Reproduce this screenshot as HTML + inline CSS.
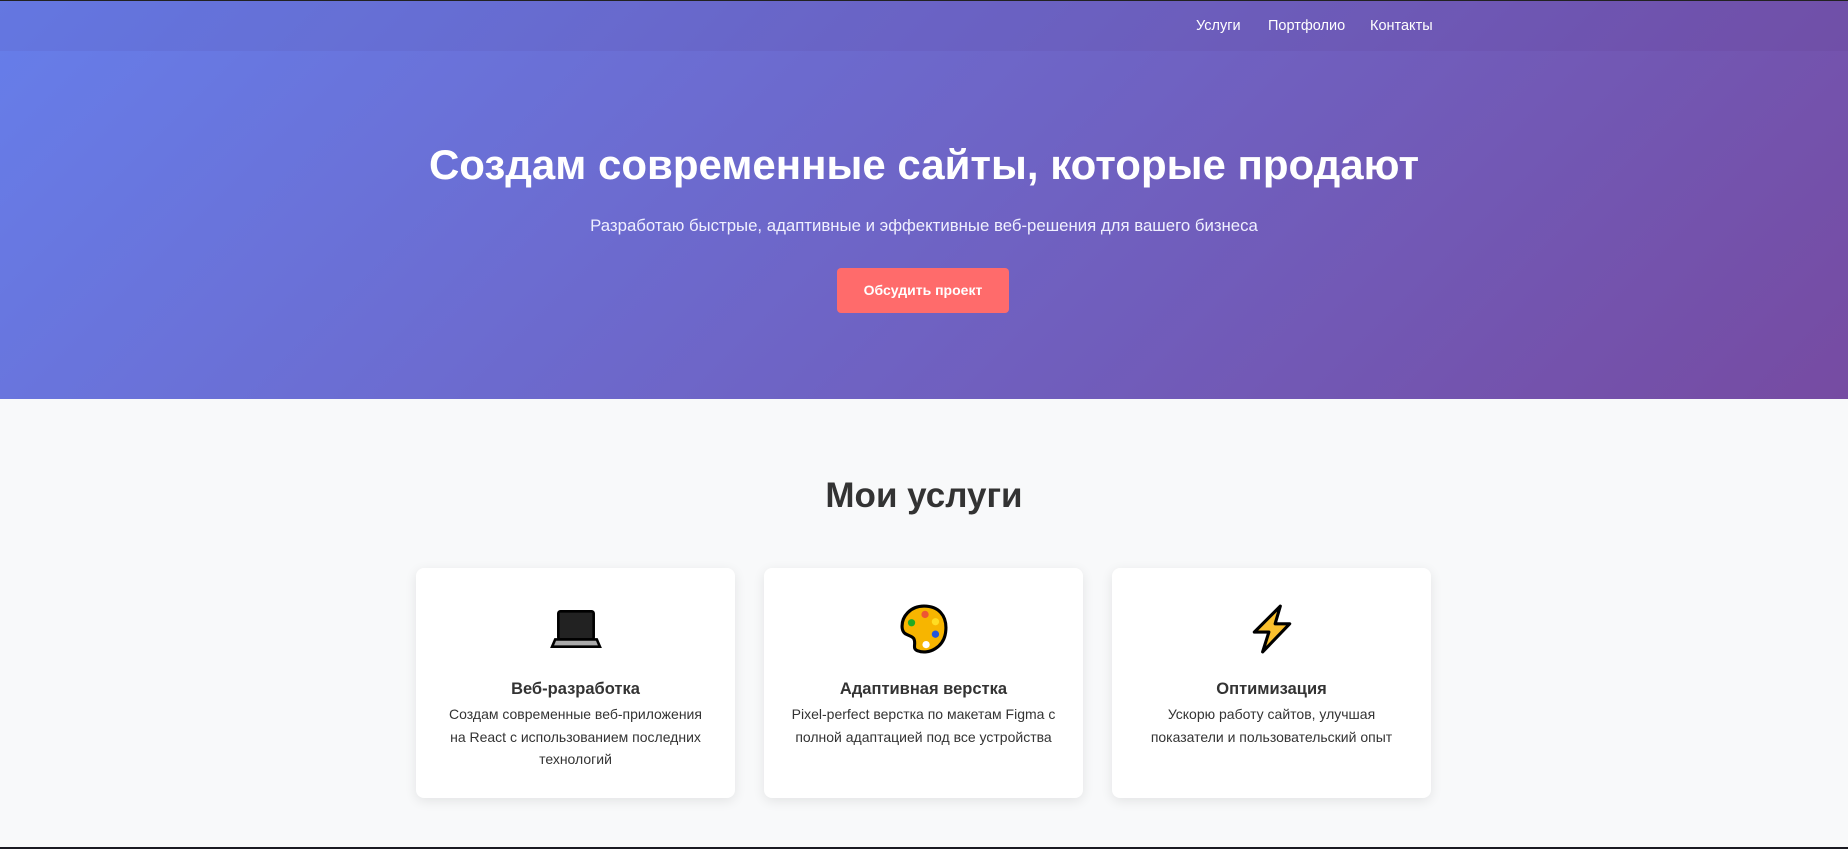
<!DOCTYPE html>
<html><head><meta charset="utf-8"><style>
*{margin:0;padding:0;box-sizing:border-box}
html,body{width:1848px;height:849px;overflow:hidden;background:#f8f9fa;font-family:"Liberation Sans",Arial,sans-serif}
.frame{position:relative;width:1848px;height:849px;border-top:1px solid #222;border-bottom:2px solid #1a1a22;overflow:hidden}
.hero{position:absolute;left:0;top:0;width:1848px;height:398px;background:linear-gradient(135deg,#667eea 0%,#764ba2 100%);color:#fff;text-align:center}
nav{position:absolute;left:0;top:0;width:100%;height:50px;background:rgba(60,20,90,0.06)}
nav a{position:absolute;top:17px;color:#fff;text-decoration:none;font-size:14.5px}
h1{position:absolute;left:0;width:100%;top:140px;font-size:42px;font-weight:bold}
.sub{position:absolute;left:0;width:100%;top:215px;font-size:16.8px;color:#f0f0ff}
.btn{position:absolute;left:837px;top:267px;width:172px;height:45px;background:#ff6b6b;border-radius:4px;color:#fff;font-weight:bold;font-size:14px;line-height:45px}
h2{position:absolute;left:0;width:100%;top:475px;text-align:center;font-size:35px;color:#333;font-weight:bold}
.card{position:absolute;top:567px;width:319px;height:230px;background:#fff;border-radius:8px;box-shadow:0 3px 12px rgba(0,0,0,0.09);text-align:center;color:#333}
.card svg{position:absolute;left:134px;top:35px}
.card h3{position:absolute;top:112px;left:0;width:100%;font-size:16.5px}
.card p{position:absolute;top:135px;left:5px;right:5px;font-size:14px;line-height:22.5px;white-space:nowrap}
</style></head><body><div class="frame">
<div class="hero">
<nav><a style="left:1196px">Услуги</a><a style="left:1268px">Портфолио</a><a style="left:1370px">Контакты</a></nav>
<h1>Создам современные сайты, которые продают</h1>
<div class="sub">Разработаю быстрые, адаптивные и эффективные веб-решения для вашего бизнеса</div>
<div class="btn">Обсудить проект</div>
</div>
<h2>Мои услуги</h2>
<div class="card" style="left:416px">
<svg width="52" height="52" viewBox="0 0 50 50"><rect x="8" y="8" width="34" height="27" rx="2" fill="#222" stroke="#000" stroke-width="2.5"/><path d="M5 35h40l3 7H2z" fill="#aaa" stroke="#000" stroke-width="2.5"/></svg>
<h3>Веб-разработка</h3>
<p>Создам современные веб-приложения<br>на React с использованием последних<br>технологий</p></div>
<div class="card" style="left:764px">
<svg width="52" height="52" viewBox="0 0 50 50"><path d="M25 3C12 3 3 13 4 24c1 8 8 6 11 10 3 5-2 10 4 12 10 4 26-3 27-20C47 12 39 3 25 3z" fill="#f7b500" stroke="#000" stroke-width="3"/><circle cx="26" cy="11" r="3.5" fill="#e53"/><circle cx="13" cy="19" r="3.5" fill="#2a2"/><circle cx="36" cy="18" r="3.5" fill="#fd2"/><circle cx="36" cy="30" r="3.5" fill="#25d"/><circle cx="27" cy="40" r="3.5" fill="#fff"/></svg>
<h3>Адаптивная верстка</h3>
<p>Pixel-perfect верстка по макетам Figma с<br>полной адаптацией под все устройства</p></div>
<div class="card" style="left:1112px">
<svg width="52" height="52" viewBox="0 0 50 50"><path d="M33 3L8 28h14l-6 19 26-27H28z" fill="#fbc02d" stroke="#000" stroke-width="3" stroke-linejoin="round"/></svg>
<h3>Оптимизация</h3>
<p>Ускорю работу сайтов, улучшая<br>показатели и пользовательский опыт</p></div>
</div></body></html>
